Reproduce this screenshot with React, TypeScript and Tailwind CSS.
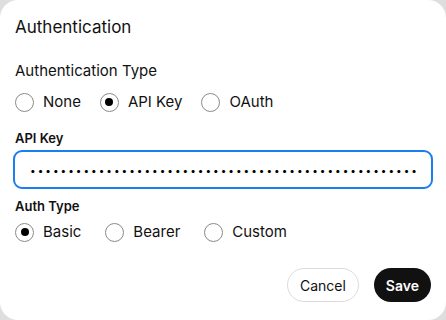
import { useState } from 'react';

const Radio = ({ label, checked, onClick }: { label: string; checked?: boolean; onClick?: () => void }) => (
  <label onClick={onClick} className="flex items-center gap-[9px] cursor-pointer">
    <span className="w-[19px] h-[19px] rounded-full border border-[#8a8a8a] flex items-center justify-center bg-white">
      {checked && <span className="w-[8px] h-[8px] rounded-full bg-black" />}
    </span>
    <span className="text-[15px] text-[#111]">{label}</span>
  </label>
);

export default function App() {
  const [authType, setAuthType] = useState('api');
  const [basic, setBasic] = useState('basic');

  return (
    <div className="w-[446px] h-[320px] bg-[#dedede]" style={{ fontFamily: 'Inter, "Noto Sans", sans-serif' }}>
      <div className="w-full h-full bg-white rounded-[18px] px-[15px] pt-[16px] flex flex-col">
        <h2 className="text-[17px] leading-[22px] text-[#111]">Authentication</h2>

        <div className="mt-[23px] text-[15px] leading-[20px] text-[#111]">Authentication Type</div>
        <div className="mt-[11px] flex items-center gap-[19px] h-[20px]">
          <Radio label="None" checked={authType === 'none'} onClick={() => setAuthType('none')} />
          <Radio label="API Key" checked={authType === 'api'} onClick={() => setAuthType('api')} />
          <Radio label="OAuth" checked={authType === 'oauth'} onClick={() => setAuthType('oauth')} />
        </div>

        <div className="mt-[18px] text-[13px] leading-[16px] font-semibold text-[#111]">API Key</div>
        <input
          type="password"
          defaultValue={'x'.repeat(57)}
          className="mt-[4px] -mx-[2px] h-[39px] rounded-[9px] border-2 border-[#1a7df0] px-[15px] text-[10px] tracking-[2px] outline-none text-black"
        />

        <div className="mt-[9px] text-[13px] leading-[16px] font-semibold text-[#111]">Auth Type</div>
        <div className="mt-[8px] flex items-center gap-[24px] h-[20px]">
          <Radio label="Basic" checked={basic === 'basic'} onClick={() => setBasic('basic')} />
          <Radio label="Bearer" checked={basic === 'bearer'} onClick={() => setBasic('bearer')} />
          <Radio label="Custom" checked={basic === 'custom'} onClick={() => setBasic('custom')} />
        </div>

        <div className="mt-[26px] flex justify-end gap-[15px]">
          <button className="h-[34px] px-[12px] rounded-full border border-[#dcdcdc] text-[14px] text-[#111] bg-white">Cancel</button>
          <button className="h-[34px] px-[12px] rounded-full bg-[#111] text-[14px] font-semibold text-white">Save</button>
        </div>
      </div>
    </div>
  );
}
